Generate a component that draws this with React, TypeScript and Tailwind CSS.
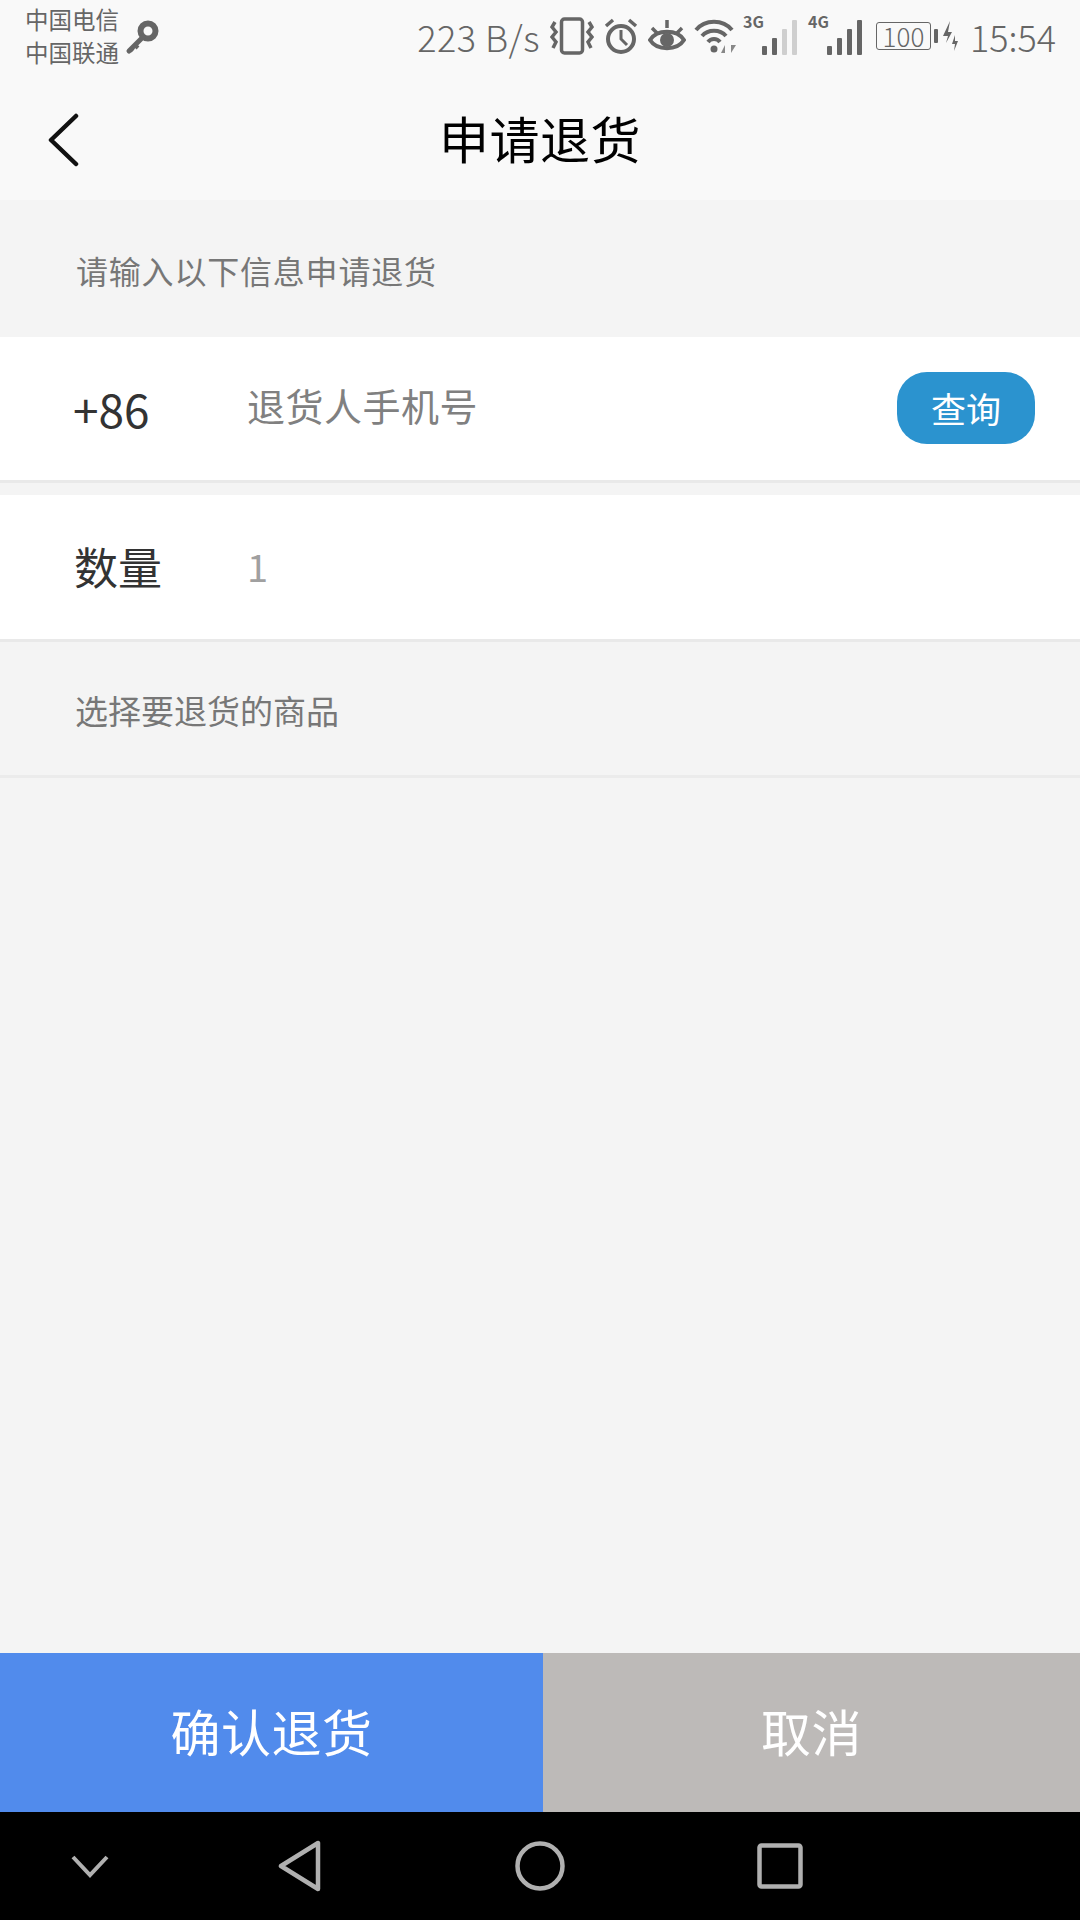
const CJK = 'font-["Noto_Sans_CJK_SC","Noto_Sans",sans-serif]';

function KeyIcon() {
  return (
    <svg width="36" height="38" viewBox="0 0 36 38" className="text-[#666]">
      <circle cx="24" cy="11" r="7.5" fill="none" stroke="currentColor" strokeWidth="6" />
      <path d="M19 17 L5 31" stroke="currentColor" strokeWidth="5" strokeLinecap="round" fill="none" />
      <path d="M11 25 L14 28 M7 29 L9 31" stroke="currentColor" strokeWidth="4" fill="none" />
    </svg>
  );
}

function VibrateIcon() {
  return (
    <svg width="44" height="38" viewBox="0 0 44 38" fill="none" stroke="#666">
      <rect x="11.5" y="2" width="21" height="34" rx="3" strokeWidth="3.5" />
      <path d="M5 5 L2 10 L6 15 L2 20 L6 25 L3 31" strokeWidth="3.5" />
      <path d="M39 5 L42 10 L38 15 L42 20 L38 25 L41 31" strokeWidth="3.5" />
    </svg>
  );
}

function AlarmIcon() {
  return (
    <svg width="34" height="38" viewBox="0 0 34 38" fill="none" stroke="#666">
      <circle cx="17" cy="22" r="13" strokeWidth="4" />
      <path d="M17 13 V22 L23 28" strokeWidth="3" />
      <path d="M2 9 L9 3 M32 9 L25 3" strokeWidth="3.5" />
    </svg>
  );
}

function EyeIcon() {
  return (
    <svg width="38" height="36" viewBox="0 0 38 36" fill="none" stroke="#666">
      <path d="M2 22 C9 11 29 11 36 22 C29 33 9 33 2 22 Z" strokeWidth="4" />
      <circle cx="19" cy="22" r="7" fill="#666" stroke="none" />
      <path d="M4 10 L9 15 M19 2 V10 M34 10 L29 15" strokeWidth="3.5" />
    </svg>
  );
}

function WifiIcon() {
  return (
    <svg width="44" height="38" viewBox="0 0 44 38" fill="none" stroke="#666" strokeWidth="4">
      <path d="M2 13 C11 2 29 2 38 13" />
      <path d="M8 19 C14 12 26 12 32 19" />
      <path d="M14 25 C17 21 23 21 26 25" />
      <circle cx="20" cy="32" r="3.5" fill="#666" stroke="none" />
      <path d="M31 36 L31 28 L27 36 Z M37 28 L37 36 L42 28 Z" fill="#888" stroke="none" />
    </svg>
  );
}

function SignalIcon({ label, active }: { label: string; active: number }) {
  const heights = [9, 17, 26, 35];
  return (
    <div className="relative h-[38px] w-[54px]">
      <span className={`absolute left-0 top-[-6px] text-[16px] font-bold leading-[20px] text-[#666] ${CJK}`}>{label}</span>
      <div className="absolute bottom-0 right-0 flex items-end gap-[5px]">
        {heights.map((h, i) => (
          <div
            key={h}
            className={`w-[5px] rounded-[1px] ${i < active ? 'bg-[#666]' : 'bg-[#cfcfcf]'}`}
            style={{ height: h }}
          />
        ))}
      </div>
    </div>
  );
}

function BoltIcon() {
  return (
    <svg width="18" height="34" viewBox="0 0 18 32" fill="#666">
      <path d="M9 1 L2 16 H7 L5 23 L11 12 H7 Z" />
      <path d="M14 15 L11 24 H14 L13 31 L17 21 H14 Z" />
    </svg>
  );
}

function StatusBar() {
  return (
    <div className={`flex h-[75px] items-center pl-[25px] pr-[24px] pb-[4px] text-[#666] ${CJK}`}>
      <div className="flex w-[96px] flex-col pt-[1px] text-[23.5px] leading-[33px]">
        <span>中国电信</span>
        <span>中国联通</span>
      </div>
      <div className="ml-[3px] mt-[6px]">
        <KeyIcon />
      </div>
      <div className="ml-auto flex items-center">
        <span className="mr-[10px] text-[36px] font-light leading-none tracking-[0.5px]">223 B/s</span>
        <VibrateIcon />
        <div className="ml-[10px]"><AlarmIcon /></div>
        <div className="ml-[10px]"><EyeIcon /></div>
        <div className="ml-[8px]"><WifiIcon /></div>
        <div className="ml-[5px]"><SignalIcon label="3G" active={2} /></div>
        <div className="ml-[11px]"><SignalIcon label="4G" active={4} /></div>
        <div className="ml-[14px] flex h-[28px] w-[55px] items-center justify-center rounded-[3px] border-[1.5px] border-[#666] text-[26px] font-light leading-none">
          100
        </div>
        <div className="ml-[3px] h-[14px] w-[4px] rounded-[1px] bg-[#666]" />
        <div className="ml-[3px]"><BoltIcon /></div>
        <span className="ml-[11px] text-[36px] font-light leading-none">15:54</span>
      </div>
    </div>
  );
}

function Header() {
  return (
    <div className="relative flex h-[125px] items-center justify-center pb-[2px]">
      <svg width="34" height="54" viewBox="0 0 34 54" fill="none" className="absolute left-[47px] top-[38px]">
        <path d="M29 3 L4 27 L29 51" stroke="#111" strokeWidth="4.5" strokeLinecap="round" strokeLinejoin="round" />
      </svg>
      <h1 className={`text-[50px] font-normal leading-none tracking-[0.5px] text-black ${CJK}`}>申请退货</h1>
    </div>
  );
}

function NavBar() {
  return (
    <div className="flex h-[108px] items-center bg-black">
      <div className="flex w-[180px] justify-center">
        <svg width="40" height="26" viewBox="0 0 40 26" fill="none">
          <path d="M3 4 L20 22 L37 4" stroke="#b0b0b0" strokeWidth="4" />
        </svg>
      </div>
      <div className="flex w-[240px] justify-center">
        <svg width="46" height="52" viewBox="0 0 46 52" fill="none">
          <path d="M41 3 V49 L4 26 Z" stroke="#b0b0b0" strokeWidth="4.5" strokeLinejoin="round" />
        </svg>
      </div>
      <div className="flex w-[240px] justify-center">
        <svg width="50" height="50" viewBox="0 0 50 50" fill="none">
          <circle cx="25" cy="25" r="22.5" stroke="#b0b0b0" strokeWidth="4.5" />
        </svg>
      </div>
      <div className="flex w-[240px] justify-center">
        <svg width="46" height="46" viewBox="0 0 46 46" fill="none">
          <rect x="2.5" y="2.5" width="41" height="41" rx="2" stroke="#b0b0b0" strokeWidth="4.5" />
        </svg>
      </div>
    </div>
  );
}

export default function App() {
  return (
    <div className={`flex h-[1920px] w-[1080px] flex-col overflow-hidden bg-[#f4f4f4] ${CJK}`}>
      <div className="bg-[#f9f9f9]">
        <StatusBar />
        <Header />
      </div>

      <div className="flex h-[137px] items-center pl-[76px] pt-[2px] text-[32px] leading-none tracking-[0.8px] text-[#777]">
        请输入以下信息申请退货
      </div>

      <div className="flex h-[146px] items-center border-b-[3px] border-[#e9e9e9] bg-white pb-[2px] pl-[73px] pr-[45px]">
        <span className="w-[174px] text-[46px] leading-none text-[#333]">+86</span>
        <span className="mb-[6px] text-[38px] leading-none tracking-[0.5px] text-[#808080]">退货人手机号</span>
        <button className="ml-auto flex h-[72px] w-[138px] items-center justify-center rounded-[30px] bg-[#2b93cf] text-[35px] leading-none text-white">
          查询
        </button>
      </div>

      <div className="h-[12px]" />

      <div className="flex h-[147px] items-center border-b-[3px] border-[#e9e9e9] bg-white pb-[2px] pl-[74px]">
        <span className="w-[173px] text-[44px] leading-none text-[#333]">数量</span>
        <span className="text-[38px] leading-none text-[#a0a0a0]">1</span>
      </div>

      <div className="flex h-[136px] items-center border-b-[3px] border-[#ebebeb] pl-[75px] pt-[4px] text-[33px] leading-none text-[#777]">
        选择要退货的商品
      </div>

      <div className="flex-1" />

      <div className="flex h-[159px] text-[50px] leading-none text-white">
        <button className="flex w-[543px] items-center justify-center bg-[#518bec] pb-[6px] tracking-[0.5px]">确认退货</button>
        <button className="flex flex-1 items-center justify-center bg-[#bdbab8] pb-[6px] tracking-[0.5px]">取消</button>
      </div>

      <NavBar />
    </div>
  );
}
